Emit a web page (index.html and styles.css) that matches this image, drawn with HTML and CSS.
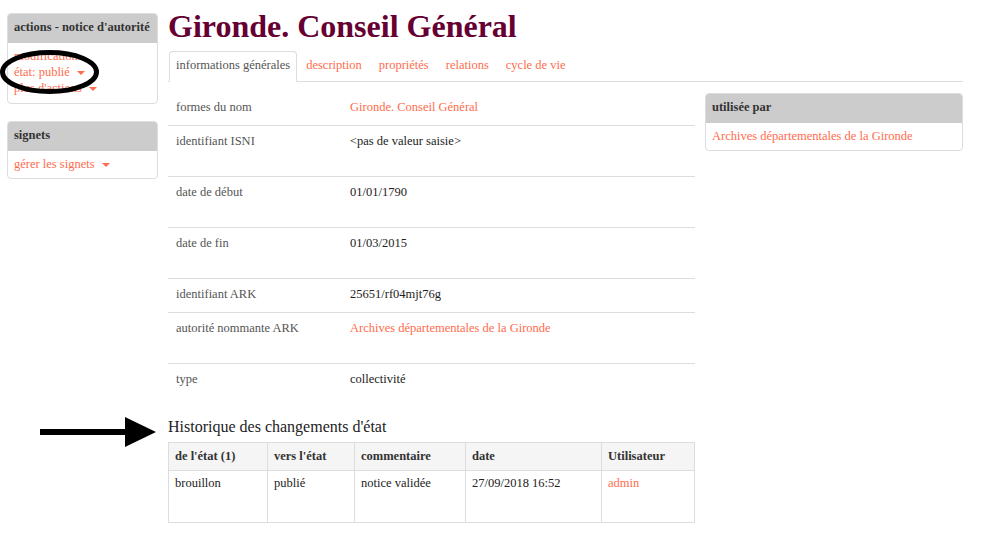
FILE: index.html
```html
<!DOCTYPE html>
<html lang="fr">
<head>
<meta charset="utf-8">
<title>Gironde. Conseil Général</title>
<link rel="stylesheet" href="styles.css">
</head>
<body>
<div class="page">
  <aside class="sidebar">
    <div class="panel">
      <div class="panel-head">actions - notice d'autorité</div>
      <div class="panel-body actions">
        <a class="link">modification</a>
        <a class="link">état: publié <span class="caret"></span></a>
        <a class="link">plus d'actions <span class="caret"></span></a>
      </div>
    </div>
    <div class="panel">
      <div class="panel-head">signets</div>
      <div class="panel-body">
        <a class="link">gérer les signets <span class="caret"></span></a>
      </div>
    </div>
  </aside>
  <main class="main">
    <h1 class="title">Gironde. Conseil Général</h1>
    <ul class="tabs">
      <li class="tab active">informations générales</li>
      <li class="tab">description</li>
      <li class="tab">propriétés</li>
      <li class="tab">relations</li>
      <li class="tab">cycle de vie</li>
    </ul>
    <div class="content">
      <div class="left-col">
        <table class="props">
          <tr><td class="label">formes du nom</td><td class="value"><a class="link">Gironde. Conseil Général</a></td></tr>
          <tr class="tall"><td class="label">identifiant ISNI</td><td class="value">&lt;pas de valeur saisie&gt;</td></tr>
          <tr class="tall"><td class="label">date de début</td><td class="value">01/01/1790</td></tr>
          <tr class="tall"><td class="label">date de fin</td><td class="value">01/03/2015</td></tr>
          <tr><td class="label">identifiant ARK</td><td class="value">25651/rf04mjt76g</td></tr>
          <tr class="tall"><td class="label">autorité nommante ARK</td><td class="value"><a class="link">Archives départementales de la Gironde</a></td></tr>
          <tr><td class="label">type</td><td class="value">collectivité</td></tr>
        </table>
        <h2 class="hist-title">Historique des changements d'état</h2>
        <table class="hist">
          <thead>
            <tr><th class="c1">de l'état (1)</th><th class="c2">vers l'état</th><th class="c3">commentaire</th><th class="c4">date</th><th>Utilisateur</th></tr>
          </thead>
          <tbody>
            <tr><td>brouillon</td><td>publié</td><td>notice validée</td><td>27/09/2018 16:52</td><td><a class="link">admin</a></td></tr>
          </tbody>
        </table>
      </div>
      <div class="right-col">
        <div class="panel">
          <div class="panel-head">utilisée par</div>
          <div class="panel-body"><a class="link">Archives départementales de la Gironde</a></div>
        </div>
      </div>
    </div>
  </main>
</div>
<svg class="mark-ellipse" width="110" height="50" viewBox="0 0 110 50">
  <ellipse cx="49.5" cy="23" rx="47" ry="19.5" fill="none" stroke="#000" stroke-width="5"/>
</svg>
<svg class="mark-arrow" width="120" height="34" viewBox="0 0 120 34">
  <rect x="0" y="13" width="90" height="6" fill="#000"/>
  <polygon points="85,1 116,16 85,31" fill="#000"/>
</svg>
</body>
</html>
```
FILE: styles.css
```css
* { box-sizing: border-box; }
body {
  margin: 0;
  font-family: "Liberation Serif", "Times New Roman", serif;
  font-size: 12.5px;
  color: #222;
  background: #fff;
  position: relative;
}
.page {
  display: flex;
  align-items: flex-start;
  padding: 13px 0 0 7px;
  gap: 10px;
}
.sidebar {
  width: 151px;
  display: flex;
  flex-direction: column;
  gap: 17px;
}
.panel {
  border: 1px solid #ddd;
  border-radius: 4px;
  overflow: hidden;
  background: #fff;
}
.panel-head {
  background: #ccc;
  height: 29px;
  line-height: 27px;
  padding: 0 6px;
  font-weight: bold;
  font-size: 12.5px;
  color: #333;
  white-space: nowrap;
}
.panel-body {
  padding: 5px 6px 6px;
  line-height: 16px;
}
.actions {
  padding-top: 5px;
  padding-bottom: 7px;
}
.actions .link { display: block; }
.link { color: #ff6c4d; text-decoration: none; }
.caret {
  display: inline-block;
  width: 0;
  height: 0;
  margin-left: 4px;
  vertical-align: middle;
  border-left: 4px solid transparent;
  border-right: 4px solid transparent;
  border-top: 4px solid #ff6c4d;
}
.main {
  flex: 0 0 795px;
}
.title {
  margin: -4px 0 8px;
  font-size: 32px;
  line-height: 34px;
  font-weight: bold;
  color: #660033;
}
.tabs {
  list-style: none;
  margin: 0;
  padding: 0;
  display: flex;
  border-bottom: 1px solid #ddd;
  height: 31px;
}
.tab {
  padding: 0 7px 3px;
  margin-left: 1px;
  line-height: 26px;
  color: #ff6c4d;
  border: 1px solid transparent;
  border-radius: 4px 4px 0 0;
  margin-bottom: -1px;
}
.tab.active {
  color: #555;
  border-color: #ddd;
  border-bottom-color: #fff;
  background: #fff;
  padding: 0 6px 3px;
  margin-left: 1px;
}
.content {
  display: flex;
  align-items: flex-start;
  gap: 10px;
}
.left-col {
  width: 527px;
}
.props {
  width: 100%;
  border-collapse: collapse;
  margin-top: 10px;
}
.props td {
  padding: 7px 8px 9px;
  line-height: 17px;
  vertical-align: top;
  border-bottom: 1px solid #ddd;
}
.props tr:last-child td { border-bottom: none; }
.props tr.tall td { padding-bottom: 26px; }
.props .label { width: 174px; color: #555; }
.hist-title {
  margin: 21px 0 6px;
  font-size: 16px;
  line-height: 18px;
  font-weight: normal;
  color: #222;
}
.hist {
  width: 100%;
  border-collapse: collapse;
  table-layout: fixed;
}
.hist th, .hist td {
  border: 1px solid #ddd;
  padding: 5px 6px;
  line-height: 16px;
  text-align: left;
  vertical-align: top;
}
.hist th {
  background: #f5f5f5;
  font-weight: bold;
  color: #333;
  height: 28px;
}
.hist td { height: 52px; padding-top: 4px; }
.hist .c1 { width: 99px; }
.hist .c2 { width: 87px; }
.hist .c3 { width: 111px; }
.hist .c4 { width: 136px; }
.right-col {
  width: 258px;
  margin-top: 11px;
}
.mark-ellipse {
  position: absolute;
  left: 0;
  top: 49px;
}
.mark-arrow {
  position: absolute;
  left: 40px;
  top: 416px;
}
```
